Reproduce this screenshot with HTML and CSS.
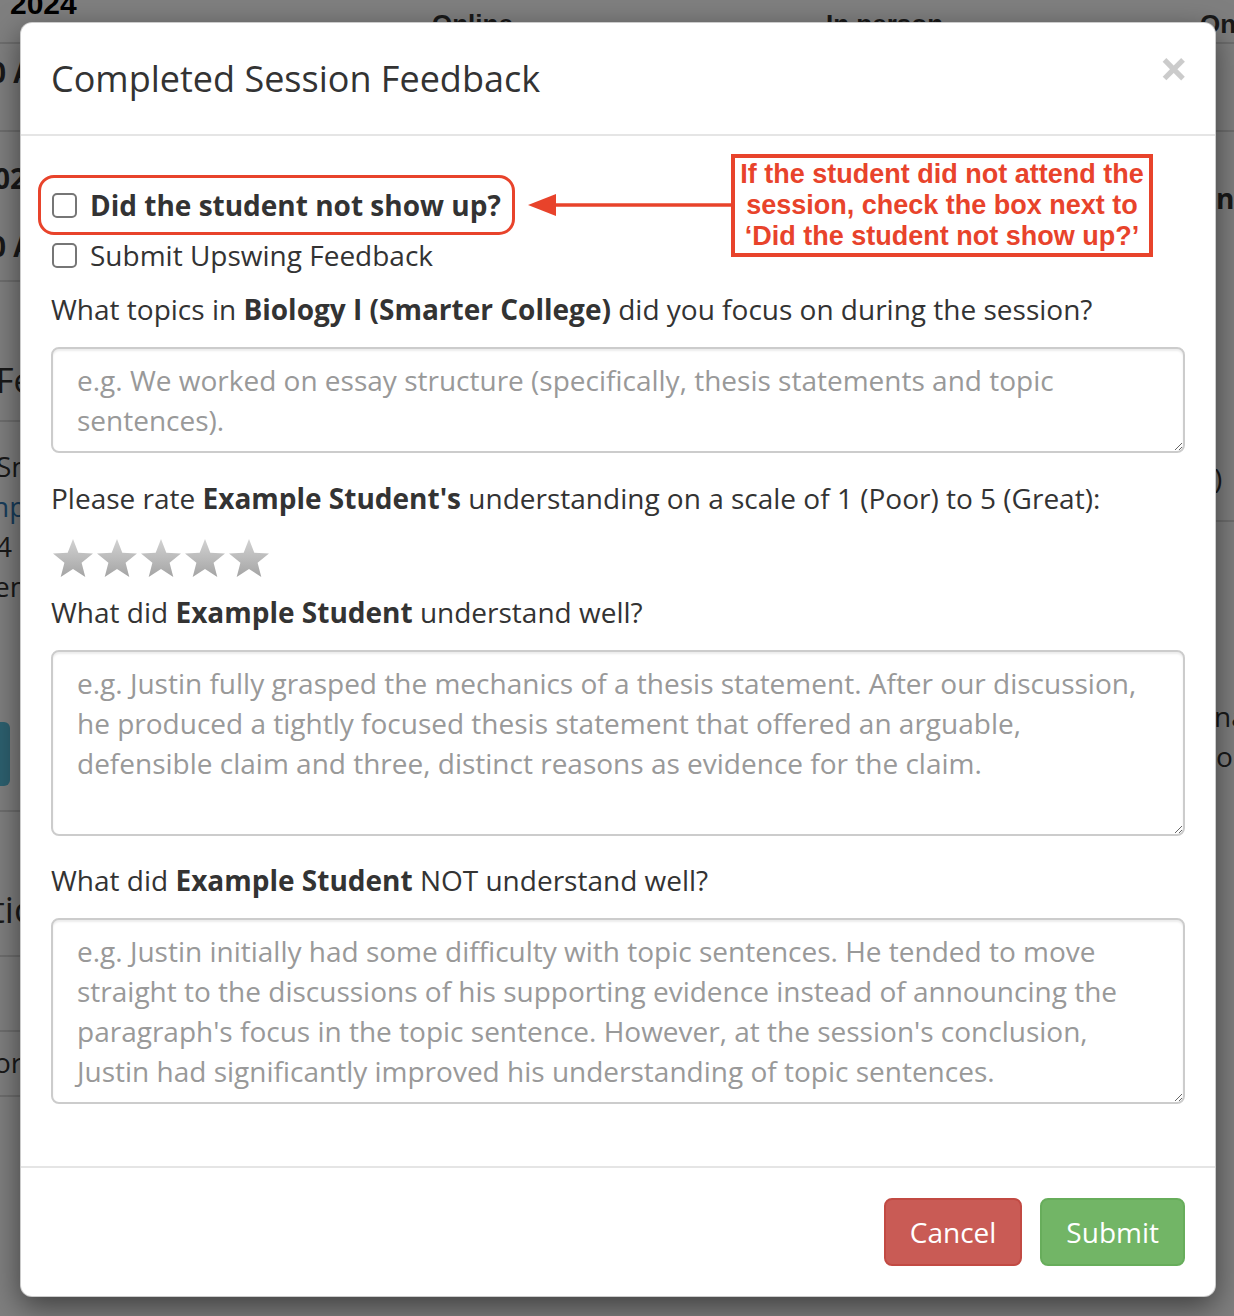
FILE: index.html
```html
<!DOCTYPE html>
<html lang="en">
<head>
<meta charset="utf-8">
<title>Completed Session Feedback</title>
<link rel="stylesheet" href="styles.css">
</head>
<body>
<div class="bg">
  <div class="bg-head">
    <span class="bg-year">2024</span>
    <span class="bg-col bg-col-online">Online</span>
    <span class="bg-col bg-col-person">In person</span>
    <span class="bg-col bg-col-on">On</span>
  </div>
  <div class="bg-frag f1">0 A</div>
  <div class="bg-frag f2">02</div>
  <div class="bg-frag f3">0 A</div>
  <div class="bg-frag f4">Fe</div>
  <div class="bg-frag f5">Sn</div>
  <div class="bg-frag f6 link">np</div>
  <div class="bg-frag f7">4 9</div>
  <div class="bg-frag f8">en</div>
  <div class="bg-btn"></div>
  <div class="bg-frag f9">tio</div>
  <div class="bg-frag f10">or</div>
  <div class="bg-frag r1">n</div>
  <div class="bg-frag r2">)</div>
  <div class="bg-frag r3">na</div>
  <div class="bg-frag r4">o</div>
  <div class="bg-line l1"></div>
  <div class="bg-line l2"></div>
  <div class="bg-line l3"></div>
  <div class="bg-line l4"></div>
  <div class="bg-line l5"></div>
  <div class="bg-line l6"></div>
  <div class="bg-line l7"></div>
  <div class="bg-line l8"></div>
  <div class="bg-line l9"></div>
  <div class="bg-line l10"></div>
</div>
<div class="backdrop"></div>

<div class="modal">
  <div class="modal-header">
    <h4 class="modal-title">Completed Session Feedback</h4>
    <button class="close" type="button">&times;</button>
  </div>
  <div class="modal-body">
    <div class="checkbox first">
      <label><input type="checkbox"> <strong>Did the student not show up?</strong></label>
    </div>
    <div class="checkbox second">
      <label><input type="checkbox"> Submit Upswing Feedback</label>
    </div>
    <div class="form-group topics">
      <label class="q">What topics in <strong>Biology I (Smarter College)</strong> did you focus on during the session?</label>
      <textarea class="form-control rows2" placeholder="e.g. We worked on essay structure (specifically, thesis statements and topic sentences)."></textarea>
    </div>
    <div class="form-group">
      <label class="q">Please rate <strong>Example Student's</strong> understanding on a scale of 1 (Poor) to 5 (Great):</label>
      <div class="stars">
        <svg width="222" height="40" viewBox="0 0 222 40">
          <defs>
            <linearGradient id="sg" x1="0" y1="0" x2="0" y2="1">
              <stop offset="0" stop-color="#d2d2d2"/>
              <stop offset="0.55" stop-color="#b9b9b9"/>
              <stop offset="1" stop-color="#a4a4a4"/>
            </linearGradient>
            <path id="star" d="M21 0 L26.3 13.7 L41 14.5 L29.6 23.8 L33.3 38 L21 30 L8.7 38 L12.4 23.8 L1 14.5 L15.7 13.7 Z"/>
          </defs>
          <use href="#star" x="0" fill="url(#sg)"/>
          <use href="#star" x="44" fill="url(#sg)"/>
          <use href="#star" x="88" fill="url(#sg)"/>
          <use href="#star" x="132" fill="url(#sg)"/>
          <use href="#star" x="176" fill="url(#sg)"/>
        </svg>
      </div>
    </div>
    <div class="form-group">
      <label class="q">What did <strong>Example Student</strong> understand well?</label>
      <textarea class="form-control rows4" placeholder="e.g. Justin fully grasped the mechanics of a thesis statement. After our discussion, he produced a tightly focused thesis statement that offered an arguable, defensible claim and three, distinct reasons as evidence for the claim."></textarea>
    </div>
    <div class="form-group last">
      <label class="q">What did <strong>Example Student</strong> NOT understand well?</label>
      <textarea class="form-control rows4" placeholder="e.g. Justin initially had some difficulty with topic sentences. He tended to move straight to the discussions of his supporting evidence instead of announcing the paragraph's focus in the topic sentence. However, at the session's conclusion, Justin had significantly improved his understanding of topic sentences."></textarea>
    </div>
  </div>
  <div class="modal-footer">
    <button class="btn btn-danger" type="button">Cancel</button>
    <button class="btn btn-success" type="button">Submit</button>
  </div>

  <div class="callout-ring"></div>
  <svg class="callout-arrow" width="206" height="26" viewBox="0 0 206 26">
    <line x1="22" y1="13" x2="206" y2="13" stroke="#e8432b" stroke-width="3.5"/>
    <polygon points="0,13 28,2 28,24" fill="#e8432b"/>
  </svg>
  <div class="callout-box">If the student did not attend the<br>session, check the box next to<br>‘Did the student not show up?’</div>
</div>
</body>
</html>
```

FILE: styles.css
```css
html, body {
  margin: 0;
  padding: 0;
}
body {
  width: 1234px;
  height: 1316px;
  overflow: hidden;
  position: relative;
  background: #fff;
  font-family: "Open Sans", "Noto Sans", sans-serif;
  color: #333;
}

/* ---------- page behind the dialog ---------- */
.bg {
  position: absolute;
  inset: 0;
  font-size: 28px;
  line-height: 40px;
  color: #333;
  overflow: hidden;
}
.bg-head {
  position: absolute;
  left: 0;
  top: 0;
  width: 1234px;
  height: 42px;
}
.bg-year {
  position: absolute;
  left: 10px;
  top: -16px;
  font-size: 30px;
  font-weight: 700;
  color: #000;
  font-family: "Liberation Sans", Arial, sans-serif;
}
.bg-col {
  position: absolute;
  top: 4px;
  font-weight: 700;
  font-size: 26px;
  font-family: "Liberation Sans", Arial, sans-serif;
}
.bg-col-online { left: 432px; }
.bg-col-person { left: 826px; }
.bg-col-on { left: 1200px; }
.bg-frag {
  position: absolute;
  white-space: nowrap;
}
.f1 { left: -10px; top: 52px; font-weight: 700; }
.f2 { left: -6px; top: 158px; font-weight: 700; }
.f3 { left: -10px; top: 226px; font-weight: 700; }
.f4 { left: -4px; top: 360px; font-size: 34px; }
.f5 { left: -4px; top: 446px; }
.f6 { left: -8px; top: 486px; }
.f7 { left: -4px; top: 526px; }
.f8 { left: -6px; top: 566px; }
.f9 { left: -8px; top: 890px; font-size: 36px; }
.f10 { left: -6px; top: 1042px; }
.r1 { left: 1216px; top: 178px; font-weight: 700; }
.r2 { left: 1214px; top: 458px; }
.r3 { left: 1214px; top: 696px; }
.r4 { left: 1216px; top: 736px; }
.link { color: #337ab7; }
.bg-btn {
  position: absolute;
  left: -20px;
  top: 722px;
  width: 30px;
  height: 64px;
  border-radius: 6px;
  background: #5bc0de;
}
.bg-line {
  position: absolute;
  height: 2px;
  background: #ddd;
}
.l1 { left: 0; top: 42px; width: 1234px; }
.l2 { left: 0; top: 130px; width: 30px; }
.l3 { left: 0; top: 280px; width: 30px; }
.l4 { left: 0; top: 420px; width: 30px; }
.l5 { left: 0; top: 810px; width: 30px; }
.l6 { left: 0; top: 955px; width: 30px; }
.l7 { left: 0; top: 1030px; width: 30px; }
.l8 { left: 0; top: 1095px; width: 30px; }
.l9 { left: 1200px; top: 130px; width: 34px; }
.l10 { left: 1200px; top: 520px; width: 34px; }

.backdrop {
  position: absolute;
  inset: 0;
  background: rgba(0, 0, 0, 0.5);
}

/* ---------- dialog ---------- */
.modal {
  position: absolute;
  left: 20px;
  top: 22px;
  width: 1196px;
  box-sizing: border-box;
  background: #fff;
  border: 1px solid rgba(0, 0, 0, 0.2);
  border-radius: 12px;
  box-shadow: 0 10px 30px rgba(0, 0, 0, 0.5);
}
.modal-header {
  display: flex;
  justify-content: space-between;
  align-items: flex-start;
  padding: 30px;
  border-bottom: 2px solid #e5e5e5;
}
.modal-title {
  margin: 0;
  font-size: 36px;
  font-weight: 400;
  line-height: 51px;
  color: #333;
}
.close {
  margin-top: -10px;
  margin-right: -3px;
  padding: 0;
  border: 0;
  background: transparent;
  font-family: "Open Sans", sans-serif;
  font-size: 50px;
  font-weight: 700;
  line-height: 50px;
  color: #000;
  opacity: 0.2;
}

.modal-body {
  padding: 30px 30px 30px;
  font-size: 28px;
  line-height: 40px;
}
.checkbox label {
  display: flex;
  align-items: center;
  gap: 13px;
  font-weight: 400;
}
.checkbox strong { font-weight: 700; }
.checkbox input {
  appearance: none;
  -webkit-appearance: none;
  width: 25px;
  height: 25px;
  margin: 0 0 0 1px;
  box-sizing: border-box;
  border: 2px solid #767676;
  border-radius: 5px;
  background: #fff;
}
.checkbox.first { margin: 19px 0 10px; }
.checkbox.second { margin: 0 0 14px; }

.form-group { margin-bottom: 24px; }
.form-group.topics { margin-bottom: 25px; }
.form-group.last { margin-bottom: 32px; }
.q {
  display: block;
  margin-bottom: 18px;
  font-weight: 400;
}
.q strong { font-weight: 700; }

.form-control {
  display: block;
  width: 100%;
  box-sizing: border-box;
  padding: 11px 24px;
  border: 2px solid #ccc;
  border-radius: 8px;
  box-shadow: inset 0 2px 2px rgba(0, 0, 0, 0.075);
  font-family: "Open Sans", sans-serif;
  font-size: 28px;
  line-height: 40px;
  color: #555;
  background: #fff;
  resize: vertical;
}
.form-control::placeholder { color: #999; }
.rows2 { height: 106px; }
.rows4 { height: 186px; }

.stars {
  height: 40px;
  padding-top: 3px;
  margin-bottom: -11px;
}
.stars svg { display: block; margin-left: 1px; }

.modal-footer {
  padding: 30px;
  border-top: 2px solid #e5e5e5;
  display: flex;
  justify-content: flex-end;
  gap: 18px;
}
.btn {
  font-family: "Open Sans", sans-serif;
  font-size: 28px;
  line-height: 40px;
  padding: 12px 24px;
  border: 2px solid transparent;
  border-radius: 8px;
  color: #fff;
}
.btn-danger { background: #c95b55; border-color: #c24a43; }
.btn-success { background: #72b566; border-color: #67ad5b; }

/* ---------- annotation ---------- */
.callout-ring {
  position: absolute;
  left: 17px;
  top: 152px;
  width: 477px;
  height: 60px;
  box-sizing: border-box;
  border: 3.5px solid #e8432b;
  border-radius: 16px;
}
.callout-arrow {
  position: absolute;
  left: 507px;
  top: 169px;
}
.callout-box {
  position: absolute;
  left: 710px;
  top: 131px;
  width: 422px;
  height: 103px;
  box-sizing: border-box;
  border: 4px solid #e8432b;
  padding: 1px 2px 0;
  background: #fff;
  color: #e8432b;
  font-family: "Liberation Sans", Arial, sans-serif;
  font-weight: 700;
  font-size: 27px;
  line-height: 31px;
  letter-spacing: 0;
  text-align: center;
  white-space: nowrap;
}
```
